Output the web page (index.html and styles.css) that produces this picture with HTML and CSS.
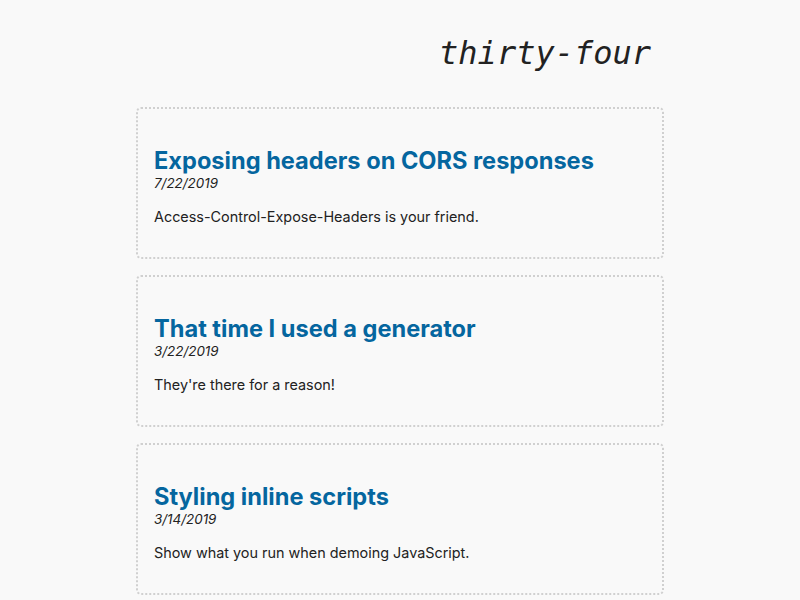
FILE: index.html
```html
<!DOCTYPE html>
<html>
<head>
<meta charset="utf-8">
<link rel="stylesheet" href="styles.css">
</head>
<body>
<div class="page">
  <header class="site-header">
    <h1 class="site-title">thirty-four</h1>
  </header>
  <main class="posts">
    <article class="post">
      <h2 class="post-title">Exposing headers on CORS responses</h2>
      <div class="post-date">7/22/2019</div>
      <p class="post-desc">Access-Control-Expose-Headers is your friend.</p>
    </article>
    <article class="post">
      <h2 class="post-title">That time I used a generator</h2>
      <div class="post-date">3/22/2019</div>
      <p class="post-desc">They're there for a reason!</p>
    </article>
    <article class="post">
      <h2 class="post-title">Styling inline scripts</h2>
      <div class="post-date">3/14/2019</div>
      <p class="post-desc">Show what you run when demoing JavaScript.</p>
    </article>
  </main>
</div>
</body>
</html>
```
FILE: styles.css
```css
html, body {
  margin: 0;
  padding: 0;
  background: #f9f9f9;
}
body {
  font-family: Inter, "Noto Sans", sans-serif;
  color: #222;
}
.page {
  width: 528px;
  margin: 0 auto;
}
.site-header {
  display: flex;
  justify-content: flex-end;
  padding: 33px 13px 0 0;
  height: 107px;
  box-sizing: border-box;
}
.site-title {
  margin: 0;
  font-family: "DejaVu Sans Mono", monospace;
  font-style: italic;
  font-weight: normal;
  font-size: 32px;
  line-height: 40px;
  color: #222;
}
.posts {
  display: flex;
  flex-direction: column;
  gap: 16px;
}
.post {
  border: 2px dotted #d0d0d0;
  border-radius: 5px;
  padding: 16px;
  height: 152px;
  box-sizing: border-box;
}
.post-title {
  margin: 21px 0 0;
  font-size: 23.6px;
  line-height: 29px;
  font-weight: 700;
  color: #05669f;
}
.post-date {
  font-size: 13.4px;
  line-height: 17px;
  font-style: italic;
}
.post-desc {
  margin: 15px 0 0;
  font-size: 14.4px;
  line-height: 20px;
}
```
